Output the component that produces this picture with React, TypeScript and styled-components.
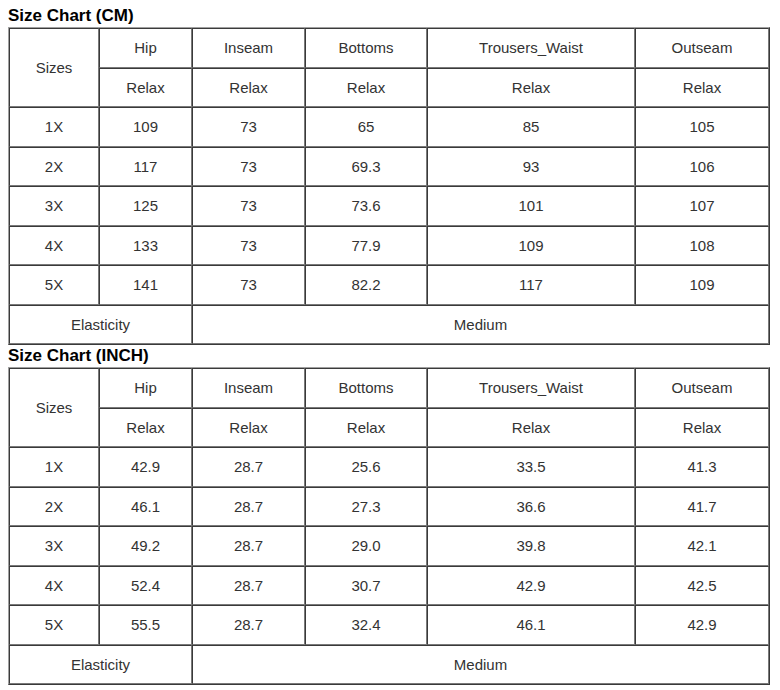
import styled, { createGlobalStyle } from "styled-components";

const GlobalStyle = createGlobalStyle`
  body {
    margin: 0;
    padding: 5px 8px 0;
    background: #fff;
    font-family: "Liberation Sans", Arial, sans-serif;
    color: #333;
  }
`;

type Row = [string, string, string, string, string, string];

const columns = ["Hip", "Inseam", "Bottoms", "Trousers_Waist", "Outseam"];
const widths = [90, 93, 113, 122, 208, 134];

const cmRows: Row[] = [
  ["1X", "109", "73", "65", "85", "105"],
  ["2X", "117", "73", "69.3", "93", "106"],
  ["3X", "125", "73", "73.6", "101", "107"],
  ["4X", "133", "73", "77.9", "109", "108"],
  ["5X", "141", "73", "82.2", "117", "109"],
];

const inchRows: Row[] = [
  ["1X", "42.9", "28.7", "25.6", "33.5", "41.3"],
  ["2X", "46.1", "28.7", "27.3", "36.6", "41.7"],
  ["3X", "49.2", "28.7", "29.0", "39.8", "42.1"],
  ["4X", "52.4", "28.7", "30.7", "42.9", "42.5"],
  ["5X", "55.5", "28.7", "32.4", "46.1", "42.9"],
];

function SizeTable({ title, rows }: { title: string; rows: Row[] }) {
  return (
    <Section>
      <Title>{title}</Title>
      <Table>
        <colgroup>
          {widths.map((w, i) => (
            <col key={i} style={{ width: w }} />
          ))}
        </colgroup>
        <tbody>
          <tr>
            <Cell rowSpan={2}>Sizes</Cell>
            {columns.map((c) => (
              <Cell key={c}>{c}</Cell>
            ))}
          </tr>
          <tr>
            {columns.map((c) => (
              <Cell key={c}>Relax</Cell>
            ))}
          </tr>
          {rows.map((r) => (
            <tr key={r[0]}>
              {r.map((v, i) => (
                <Cell key={i}>{v}</Cell>
              ))}
            </tr>
          ))}
          <tr>
            <Cell colSpan={2}>Elasticity</Cell>
            <Cell colSpan={4}>Medium</Cell>
          </tr>
        </tbody>
      </Table>
    </Section>
  );
}

export default function App() {
  return (
    <>
      <GlobalStyle />
      <SizeTable title="Size Chart (CM)" rows={cmRows} />
      <SizeTable title="Size Chart (INCH)" rows={inchRows} />
    </>
  );
}

const Section = styled.div`
  display: flex;
  flex-direction: column;
`;

const Title = styled.div`
  font-size: 17px;
  font-weight: bold;
  line-height: 22px;
  color: #000;
`;

const Table = styled.table`
  width: 762px;
  table-layout: fixed;
  border-collapse: separate;
  border-spacing: 0;
  border-style: solid;
  border-width: 1px;
  border-color: #a0a0a0 #3a3a3a #3a3a3a #a0a0a0;

  tr {
    height: 39.5px;
  }
`;

const Cell = styled.td`
  box-sizing: border-box;
  padding: 0;
  text-align: center;
  vertical-align: middle;
  font-size: 15px;
  color: #333;
  border-style: solid;
  border-width: 1px;
  border-color: #3a3a3a #7a7a7a #7a7a7a #3a3a3a;
`;
